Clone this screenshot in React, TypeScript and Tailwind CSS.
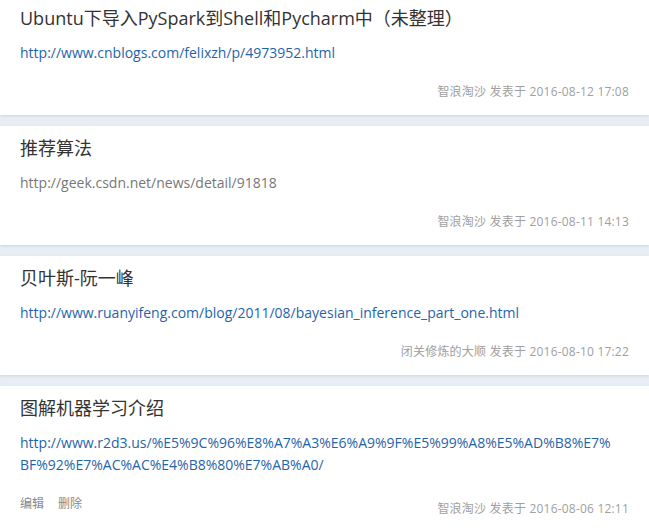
import React from "react";

type Post = {
  title: string;
  url: string;
  author: string;
  date: string;
  visited?: boolean;
  mine?: boolean;
};

const posts: Post[] = [
  {
    title: "Ubuntu下导入PySpark到Shell和Pycharm中（未整理）",
    url: "http://www.cnblogs.com/felixzh/p/4973952.html",
    author: "智浪淘沙",
    date: "2016-08-12 17:08",
  },
  {
    title: "推荐算法",
    url: "http://geek.csdn.net/news/detail/91818",
    author: "智浪淘沙",
    date: "2016-08-11 14:13",
    visited: true,
  },
  {
    title: "贝叶斯-阮一峰",
    url: "http://www.ruanyifeng.com/blog/2011/08/bayesian_inference_part_one.html",
    author: "闭关修炼的大顺",
    date: "2016-08-10 17:22",
  },
  {
    title: "图解机器学习介绍",
    url: "http://www.r2d3.us/%E5%9C%96%E8%A7%A3%E6%A9%9F%E5%99%A8%E5%AD%B8%E7%BF%92%E7%AC%AC%E4%B8%80%E7%AB%A0/",
    author: "智浪淘沙",
    date: "2016-08-06 12:11",
    mine: true,
  },
];

function PostCard({ post }: { post: Post }) {
  return (
    <div className="bg-white px-5 pt-[10px] pb-[15px] shadow-[0_1px_3px_rgba(150,170,200,0.35)]">
      <h3 className="text-[18px] leading-6 text-[#333] font-normal">{post.title}</h3>
      <a
        href="#"
        className={`block mt-[12px] pr-[14px] text-[14px] leading-[22px] break-all ${
          post.visited ? "text-[#777]" : "text-[#1f64ab]"
        }`}
      >
        {post.url}
      </a>
      <div className="flex items-end justify-between mt-[20px]">
        <div className="flex gap-[14px] text-[12px] leading-4 text-[#888] mb-[5px]">
          {post.mine && (
            <>
              <span>编辑</span>
              <span>删除</span>
            </>
          )}
        </div>
        <div className="text-[12px] leading-4 text-[#a0a0a0] tracking-[0.2px]">
          {post.author} 发表于 {post.date}
        </div>
      </div>
    </div>
  );
}

export default function App() {
  return (
    <div
      className="min-h-screen bg-[#e9eef5] overflow-hidden"
      style={{ fontFamily: '"Open Sans", "Noto Sans CJK SC", sans-serif' }}
    >
      <div className="flex flex-col gap-[11px] -mt-[4px]">
        {posts.map((p, i) => (
          <PostCard key={i} post={p} />
        ))}
      </div>
    </div>
  );
}
